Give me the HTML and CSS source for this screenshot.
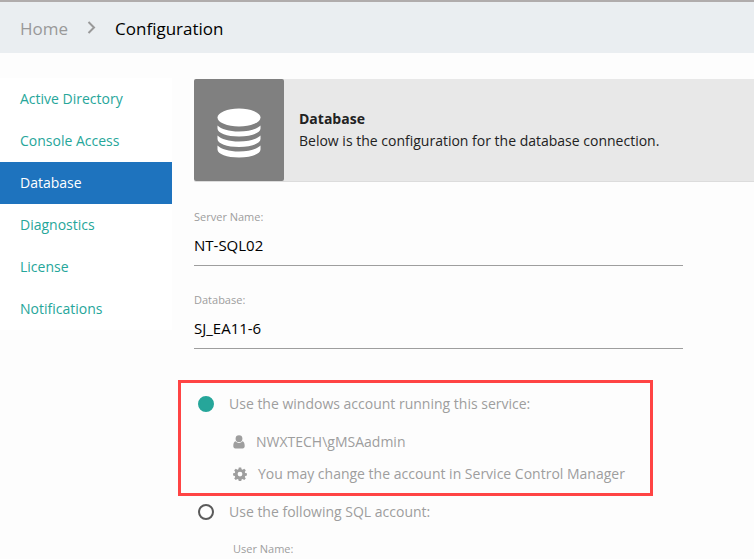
FILE: index.html
```html
<!DOCTYPE html>
<html lang="en">
<head>
<meta charset="utf-8">
<title>Configuration</title>
<link rel="stylesheet" href="styles.css">
</head>
<body>
<header class="topbar">
  <nav class="breadcrumb" aria-label="Breadcrumb">
    <a class="crumb" href="#home">Home</a>
    <svg class="chevron" viewBox="0 0 9 13" aria-hidden="true"><path d="M1.500 1l5.500 5.500-5.500 5.500"/></svg>
    <span class="crumb-current">Configuration</span>
  </nav>
</header>
<div class="layout">
  <nav class="sidebar" aria-label="Settings">
    <a href="#active-directory">Active Directory</a>
    <a href="#console-access">Console Access</a>
    <a class="active" href="#database">Database</a>
    <a href="#diagnostics">Diagnostics</a>
    <a href="#license">License</a>
    <a href="#notifications">Notifications</a>
  </nav>
  <main class="content">
    <section class="banner">
      <div class="banner-icon">
        <svg viewBox="0 0 44 50" aria-hidden="true">
          <ellipse cx="22" cy="9.5" rx="21.5" ry="9"/>
          <path d="M.5 17.500C4 21 12 23.500 22 23.500S40 21 43.500 17.500V20.500C43.500 25 34 28.500 22 28.500S.5 25 .5 20.500z"/>
          <path d="M.5 27.500C4 31 12 33.500 22 33.500S40 31 43.500 27.500V31C43.500 35.500 34 39 22 39S.5 35.500 .5 31z"/>
          <path d="M.5 37.500C4 41 12 43.500 22 43.500S40 41 43.500 37.500V41.500C43.500 46 34 49.500 22 49.500S.5 46 .5 41.500z"/>
        </svg>
      </div>
      <div class="banner-text">
        <h1>Database</h1>
        <p>Below is the configuration for the database connection.</p>
      </div>
    </section>
    <form class="form">
      <div class="field">
        <label for="server">Server Name:</label>
        <input id="server" type="text" value="NT-SQL02">
      </div>
      <div class="field">
        <label for="db">Database:</label>
        <input id="db" type="text" value="SJ_EA11-6">
      </div>
      <div class="option highlighted">
        <label class="choice"><input type="radio" name="account" checked>Use the windows account running this service:</label>
        <p class="detail">
          <svg viewBox="0 0 12 14" aria-hidden="true"><circle cx="6" cy="3.700" r="3.400"/><path d="M2.600 6.200C1 6.600.3 8.500.3 11c0 1.500.8 2.400 2 2.400h7.400c1.200 0 2-.9 2-2.400 0-2.500-.7-4.400-2.300-4.800C8.500 7.300 7.300 7.900 6 7.900S3.500 7.300 2.600 6.200z"/></svg>
          <span>NWXTECH\gMSAadmin</span>
        </p>
        <p class="detail wide">
          <svg viewBox="0 0 14 14" aria-hidden="true"><path fill-rule="evenodd" d="M5.800.5h2.400l.4 1.800 1 .4 1.600-1 1.600 1.600-1 1.600.4 1 1.700.3v2.300l-1.700.4-.4 1 1 1.600-1.600 1.600-1.600-1-1 .4-.4 1.700H5.800l-.4-1.700-1-.4-1.600 1-1.600-1.600 1-1.600-.4-1-1.700-.4V6.200l1.700-.3.4-1-1-1.600 1.600-1.600 1.600 1 1-.4zM7 4.700a2.400 2.400 0 1 0 0 4.800 2.400 2.400 0 0 0 0-4.800z"/></svg>
          <span>You may change the account in Service Control Manager</span>
        </p>
      </div>
      <div class="option">
        <label class="choice"><input type="radio" name="account">Use the following SQL account:</label>
        <div class="field nested">
          <label for="user">User Name:</label>
          <input id="user" type="text">
        </div>
      </div>
    </form>
  </main>
</div>
</body>
</html>
```
FILE: styles.css
```css
* { box-sizing: border-box; }
body {
  margin: 0;
  height: 100vh;
  overflow: hidden;
  background: #fdfdfd;
  color: #222;
  font-family: "Open Sans", "Noto Sans", sans-serif;
  font-size: 14px;
  line-height: 22px;
}
h1, p { margin: 0; }
a { text-decoration: none; }

.topbar {
  border-top: 2px solid #b0acac;
  background: #eaeef1;
}
.breadcrumb {
  display: flex;
  align-items: center;
  gap: 19px;
  height: 51px;
  padding: 2px 20px 0;
  font-size: 17px;
}
.crumb { color: #999; }
.crumb-current { color: #000; }
.chevron {
  width: 9px;
  height: 13px;
  margin-bottom: 2px;
  fill: none;
  stroke: #999;
  stroke-width: 2;
}

.layout { display: flex; padding-top: 25px; }
.sidebar {
  flex: 0 0 172px;
  align-self: flex-start;
  background: #fff;
}
.sidebar a {
  display: block;
  padding: 10px 20px;
  color: #26a69a;
}
.sidebar .active { background: #1e73be; color: #fff; }

.content { flex: 1; min-width: 0; padding: 1px 0 0 22px; }
.banner {
  display: flex;
  background: #e8e8e8;
  border-bottom: 1px solid #dcdcdc;
  border-radius: 2px 0 0 2px;
}
.banner-icon {
  display: flex;
  align-items: center;
  justify-content: center;
  width: 90px;
  height: 102px;
  padding-top: 5px;
  border-radius: 2px;
  background: #808080;
}
.banner-icon svg { width: 44px; height: 50px; fill: #fff; }
.banner-text { padding: 29px 15px; }
.banner-text h1 { font-size: 14px; font-weight: 700; line-height: 22px; }

.form { padding-top: 26px; }
.field { max-width: 489px; margin-bottom: 25px; }
.field label {
  display: block;
  color: #9e9e9e;
  font-size: 11px;
  line-height: 18px;
}
.field input {
  display: block;
  width: 100%;
  height: 40px;
  padding: 0 0 2px;
  border: 0;
  border-bottom: 1px solid #9e9e9e;
  border-radius: 0;
  background: transparent;
  color: #000;
  font: inherit;
  font-size: 15px;
}
.option { max-width: 475px; padding: 0 4px; color: #9e9e9e; }
.highlighted {
  margin: 31px 0 5px -16px;
  padding: 10px 17px 3px;
  border: 3px solid #ff4444;
}
.choice { display: flex; align-items: center; gap: 15px; }
.choice input {
  appearance: none;
  width: 16px;
  height: 16px;
  margin: 0;
  border: 2px solid #5a5a5a;
  border-radius: 50%;
}
.choice input:checked { border-color: #26a69a; background: #26a69a; }
.detail {
  display: flex;
  align-items: center;
  gap: 11px;
  padding: 5px 0 5px 35px;
}
.choice + .detail { margin-top: 11px; }
.detail svg { width: 12px; height: 14px; fill: #9e9e9e; }
.detail.wide svg { width: 14px; }
.nested { padding: 17px 0 0 35px; }
```
